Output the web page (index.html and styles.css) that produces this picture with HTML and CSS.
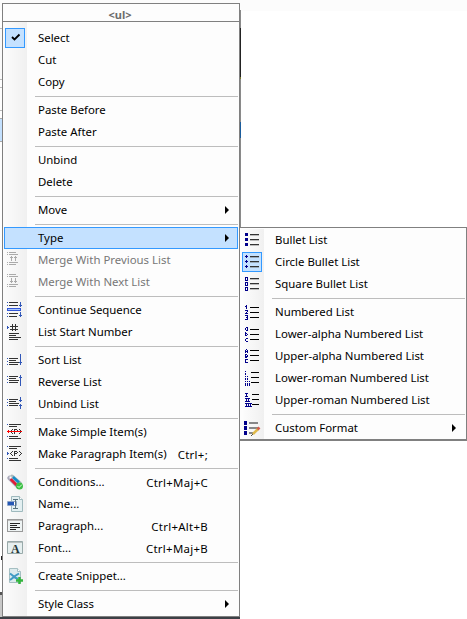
FILE: index.html
```
<!DOCTYPE html>
<html lang="en">
<head>
<meta charset="utf-8">
<title>List menu</title>
<link rel="stylesheet" href="styles.css">
</head>
<body>
<div class="backdrop"><i class="b1"></i><i class="b2"></i><i class="b3"></i><i class="b4"></i><i class="b5"></i><i class="b6"></i><i class="b7"></i><i class="b8"></i><i class="b9"></i><i class="b10"></i><i class="b11"></i></div>
<nav class="menu main">
<header class="title">&lt;ul&gt;</header>
<div class="items">
<div class="item"><span class="icon checked"><svg width="20" height="20"><path d="M7 9l2.500 2.500 5-5" fill="none" stroke="#000" stroke-width="1.800"/></svg></span><span class="label">Select</span></div>
<div class="item"><span class="icon"></span><span class="label">Cut</span></div>
<div class="item"><span class="icon"></span><span class="label">Copy</span></div>
<hr>
<div class="item"><span class="icon"></span><span class="label">Paste Before</span></div>
<div class="item"><span class="icon"></span><span class="label">Paste After</span></div>
<hr>
<div class="item"><span class="icon"></span><span class="label">Unbind</span></div>
<div class="item"><span class="icon"></span><span class="label">Delete</span></div>
<hr>
<div class="item"><span class="icon"></span><span class="label">Move</span><b class="arrow"></b></div>
<hr>
<div class="item active"><span class="icon"></span><span class="label">Type</span><b class="arrow"></b></div>
<div class="item disabled"><span class="icon"><svg class="px" width="16" height="16"><path stroke="#aaa" d="M0 .5h1M2 .5h7M0 2.500h1M2 2.500h9M0 10.500h1M2 10.500h9M0 12.500h1M2 12.500h7M4.500 4v5M8.500 4v5M3 5.500h3M7 5.500h3"/></svg></span><span class="label">Merge With Previous List</span></div>
<div class="item disabled"><span class="icon"><svg class="px" width="16" height="16"><path stroke="#aaa" d="M0 .5h1M2 .5h7M0 2.500h1M2 2.500h9M0 10.500h1M2 10.500h9M0 12.500h1M2 12.500h7M4.500 4v5M8.500 4v5M3 7.500h3M7 7.500h3"/></svg></span><span class="label">Merge With Next List</span></div>
<hr>
<div class="item"><span class="icon"><svg class="px" width="16" height="16"><path stroke="#333" d="M2 .5h9M2 3.500h9M2 11.500h9M2 14.500h8"/><path fill="#aac8ff" stroke="#3157d8" d="M.5 6.500h13v2h-13z"/><path stroke="#3157b8" d="M0 .5h1M0 3.500h1M0 11.500h1M0 14.500h1M13.500 0v5M12 3.500h3M13.500 10v5M12 13.500h3"/></svg></span><span class="label">Continue Sequence</span></div>
<div class="item"><span class="icon"><svg class="px" width="16" height="16"><path stroke="#333" d="M5.500 0v7M8.500 0v7M3 2.500h8M3 5.500h8M2 9.500h10M2 11.500h7M2 13.500h12M2 15.500h9"/><path stroke="#3157b8" d="M.5 2v3M1.500 3v1"/></svg></span><span class="label">List Start Number</span></div>
<hr>
<div class="item"><span class="icon"><svg class="px" width="16" height="16"><path stroke="#333" d="M2 6.500h9M2 8.500h7M2 10.500h10M2 12.500h9"/><path stroke="#3157b8" d="M0 6.500h1M0 9.500h1M0 12.500h1M13.500 2v11M12 10.500h3"/></svg></span><span class="label">Sort List</span></div>
<div class="item"><span class="icon"><svg class="px" width="16" height="16"><path stroke="#333" d="M2 2.500h9M2 4.500h7M2 6.500h10M2 8.500h9"/><path stroke="#3157b8" d="M0 2.500h1M0 5.500h1M0 8.500h1M13.500 1v11M12 3.500h3"/></svg></span><span class="label">Reverse List</span></div>
<div class="item"><span class="icon"><svg class="px" width="16" height="16"><path stroke="#333" d="M2 3.500h9M2 5.500h7M2 7.500h10M2 9.500h9"/><path stroke="#3157b8" d="M0 3.500h1M0 6.500h1M0 9.500h1M13.500 1v5M12 4.500h3M13.500 8v5M12 9.500h3"/></svg></span><span class="label">Unbind List</span></div>
<hr>
<div class="item"><span class="icon"><svg class="px" width="16" height="16"><path stroke="#333" d="M2 .5h12M2 2.500h8M2 12.500h9M2 14.500h12M5.500 5v1M4.500 6v1M4.500 8v1M3.500 7v1M5.500 9v1M7.500 5v5M8 5.500h2M8 7.500h2M10.500 6v1M12.500 5v1M13.500 6v1M14.500 7v1M13.500 8v1M12.500 9v1"/><path stroke="#3157b8" d="M0 .5h1M0 12.500h1"/><path stroke="red" d="M0 7.500h15M1.500 6v3"/></svg></span><span class="label">Make Simple Item(s)</span></div>
<div class="item"><span class="icon"><svg class="px" width="16" height="16"><path stroke="#333" d="M2 .5h12M2 2.500h8M2 12.500h9M2 14.500h12M5.500 5v1M4.500 6v1M3.500 7v1M4.500 8v1M5.500 9v1M7.500 5v5M8 5.500h2M8 7.500h2M10.500 6v1M12.500 5v1M13.500 6v1M14.500 7v1M13.500 8v1M12.500 9v1"/><path stroke="#3157b8" d="M0 .5h1M0 12.500h1M.5 6v3M1.500 7v1"/></svg></span><span class="label">Make Paragraph Item(s)</span><kbd>Ctrl+;</kbd></div>
<hr>
<div class="item"><span class="icon"><svg width="16" height="16"><path d="M2.500 4l8 8" stroke="#aab" stroke-width="4.500" stroke-linecap="round"/><path d="M5 2.500l8 7" stroke="#aab9bd" stroke-width="4" stroke-linecap="round"/><path d="M6 3l6 5.500" stroke="#168bc9" stroke-width="2.500"/><path d="M3.500 5l6 6" stroke="#e01b35" stroke-width="2.500"/><path d="M2.500 2.500h2v2h-2z" fill="#fff"/><circle cx="12.500" cy="12" r="3.500" fill="#3cbf45"/><path d="M10.500 12l1.500 1.500 3-3" stroke="#d8ffd8" fill="none"/></svg></span><span class="label">Conditions...</span><kbd>Ctrl+Maj+C</kbd></div>
<div class="item"><span class="icon"><svg width="16" height="16"><path d="M4.500.5h8l3 3v12h-11z" fill="#e3eff1" stroke="#9eb9bd"/><path d="M12.500.5v3h3" fill="#fff" stroke="#9eb9bd"/><path d="M.5 5.500h9v4h-9z" fill="#fff" stroke="#8ba4c9"/><path d="M1 6h6v3H1z" fill="#2457b5"/><path d="M6 3.500h5M8.500 4v8M6 12.500h5" stroke="#56727e"/></svg></span><span class="label">Name...</span></div>
<div class="item"><span class="icon"><svg class="px" width="16" height="16"><path d="M.5 1.500h15v12H.5z" fill="#eef3f3" stroke="#999"/><path d="M1 2h14v1H1z" fill="#bbb"/><path d="M3 5.500h10M3 7.500h7M3 9.500h10M3 11.500h6" stroke="#222"/></svg></span><span class="label">Paragraph...</span><kbd>Ctrl+Alt+B</kbd></div>
<div class="item"><span class="icon"><svg width="16" height="16"><path d="M.5 1.500h15v12H.5z" fill="#e6efef" stroke="#9aa"/><path d="M1 2h14v1H1z" fill="#b9bfbf"/><text class="glyph" x="4" y="12.500">A</text></svg></span><span class="label">Font...</span><kbd>Ctrl+Maj+B</kbd></div>
<hr>
<div class="item"><span class="icon"><svg width="16" height="16"><path d="M2.500.5h8l3 3v11h-11z" fill="#dcebed" stroke="#a5bfc2"/><path d="M10.500.5v3h3" fill="#fff" stroke="#a5bfc2"/><path d="M3 5.500l4 3 5-3M3 12l4-3 4 2" fill="none" stroke="#409bc4" stroke-width="2"/><path d="M12.500 9v7M9 12.500h7" stroke="#32b43c" stroke-width="2.500"/></svg></span><span class="label">Create Snippet...</span></div>
<hr>
<div class="item"><span class="icon"></span><span class="label">Style Class</span><b class="arrow"></b></div>
</div>
</nav>
<nav class="menu sub">
<div class="item"><span class="icon"><svg class="px" width="16" height="16"><path fill="#00008b" d="M0 0h3v3H0zM0 5h3v3H0zM0 10h3v3H0z"/><path stroke="#333" d="M5 1.500h9M5 6.500h9M5 11.500h9"/><path stroke="#bbb" d="M5 2.500h9M5 7.500h9M5 12.500h9"/></svg></span><span class="label">Bullet List</span></div>
<div class="item"><span class="icon checked"><svg class="px" width="20" height="20"><path stroke="#00008b" d="M3 4.500h3M4.500 3v3M3 9.500h3M4.500 8v3M3 14.500h3M4.500 13v3"/><path stroke="#333" d="M8 4.500h9M8 9.500h9M8 14.500h9"/><path stroke="#9ab" d="M8 5.500h9M8 10.500h9M8 15.500h9"/></svg></span><span class="label">Circle Bullet List</span></div>
<div class="item"><span class="icon"><svg class="px" width="16" height="16"><path fill="#fff" stroke="#00008b" d="M.5.5h2v3h-2zM.5 5.500h2v3h-2zM.5 10.500h2v3h-2z"/><path stroke="#333" d="M5 1.500h9M5 6.500h9M5 11.500h9"/><path stroke="#bbb" d="M5 2.500h9M5 7.500h9M5 12.500h9"/></svg></span><span class="label">Square Bullet List</span></div>
<hr>
<div class="item"><span class="icon"><svg class="px" width="16" height="16"><path stroke="#00008b" d="M1.500 0v4M0 1.500h1M0 5.500h3M2.500 6v1M1.500 7v1M0 8.500h3M0 10.500h3M1 12.500h2M2.500 10v4M0 14.500h3"/><path stroke="#000" d="M5 2.500h9M5 7.500h9M5 12.500h9"/></svg></span><span class="label">Numbered List</span></div>
<div class="item"><span class="icon"><svg class="px" width="16" height="16"><path stroke="#00008b" d="M1 .5h2M.5 1v2M2.500 0v4M1 3.500h2M.5 5v4M1 6.500h1M2.500 7v1M1 8.500h1M1 11.500h2M.5 12v2M1 14.500h2"/><path stroke="#000" d="M5 2.500h9M5 7.500h9M5 12.500h9"/></svg></span><span class="label">Lower-alpha Numbered List</span></div>
<div class="item"><span class="icon"><svg class="px" width="16" height="16"><path stroke="#00008b" d="M.5 1v3M2.500 1v3M1 .5h1M1 2.500h1M.5 5v4M1 5.500h1M1 7h1M1 8.500h1M2.500 6v1M2.500 7v1M.5 10v4M0 10.500h3M0 13.500h3"/><path stroke="#000" d="M5 1.500h9M5 6.500h9M5 11.500h9"/></svg></span><span class="label">Upper-alpha Numbered List</span></div>
<div class="item"><span class="icon"><svg class="px" width="16" height="16"><path stroke="#00008b" d="M.5 0v1M.5 2v2M.5 5v1M.5 7v2M2.500 5v1M2.500 7v2M.5 10v1M.5 12v3M2.500 10v1M2.500 12v3M4.500 10v1M4.500 12v3"/><path stroke="#000" d="M6 1.500h8M6 6.500h8M6 11.500h8"/></svg></span><span class="label">Lower-roman Numbered List</span></div>
<div class="item"><span class="icon"><svg class="px" width="16" height="16"><path stroke="#00008b" d="M0 .5h3M1.500 0v4M0 3.500h3M0 5.500h5M1.500 5v4M3.500 5v4M0 8.500h5M0 10.500h7M1.500 10v4M3.500 10v4M5.500 10v4M0 13.500h7"/><path stroke="#000" d="M7 1.500h7M7 6.500h7M7 11.500h7"/></svg></span><span class="label">Upper-roman Numbered List</span></div>
<hr>
<div class="item"><span class="icon"><svg width="18" height="16"><path fill="#00008b" d="M-1 0h3v4h-3zM-1 5h3v4h-3zM-1 10h3v4h-3z"/><path stroke="#888" stroke-width="2" d="M4 2h9M4 7h9M4 12h4"/><path stroke="#dfb94a" stroke-width="2.500" d="M8 13l5-5"/><path stroke="#d65b4b" stroke-width="2.500" d="M12.500 8.500l2-2"/><path stroke="#554" d="M6 15l2-2"/></svg></span><span class="label">Custom Format</span><b class="arrow"></b></div>
</nav>
</body>
</html>
```
FILE: styles.css
```
* { box-sizing: border-box; }
body { margin: 0; width: 467px; height: 619px; overflow: hidden; position: relative; background: #fff; font-family: "Noto Sans", sans-serif; font-size: 11.4px; color: #000; }
.backdrop i { position: absolute; display: block; }
.b1 { left: 0; top: 0; width: 467px; height: 11px; background: #fcfcfc; }
.b2 { left: 240px; top: 10px; width: 1px; height: 217px; background: #8a8a8a; }
.b3 { left: 240px; top: 28px; width: 1px; height: 49px; background: #222; }
.b4 { left: 240px; top: 122px; width: 1px; height: 16px; background: #1b5c9c; }
.b5 { left: 0; top: 28px; width: 2px; height: 52px; background: #fafafa; border: solid #bbb; border-width: 1px 0; }
.b6 { left: 0; top: 118px; width: 2px; height: 24px; background: #c4e1ff; border: solid #aaa; border-width: 1px 0; }
.b7 { left: 0; top: 592px; width: 2px; height: 27px; background: #c8c8c8; border-top: 3px solid #555; }
.b8 { left: 0; top: 617px; width: 240px; height: 2px; background: #3c4046; }
.b9 { left: 240px; top: 77px; width: 1px; height: 2px; background: #77772a; }
.b10 { left: 0; top: 87px; width: 2px; height: 24px; border: solid #bbb; border-width: 1px 0; }
.b11 { left: 1px; top: 556px; width: 1px; height: 4px; background: #222; }
.menu { position: absolute; background: #fdfdfd; border: 1px solid #808080; }
.main { left: 2px; top: 3px; width: 238px; height: 614px; }
.sub { left: 239px; top: 227px; width: 228px; height: 214px; padding-top: 1px; border-bottom-width: 2px; background: linear-gradient(90deg, #fcfcfc, #f0f0f0) 3px 1px / 21px 210px no-repeat #fdfdfd; }
.title { height: 18px; border-bottom: 1px solid #808080; text-align: center; font: bold 11px/22px "Noto Sans", sans-serif; color: #6d6d6d; padding-right: 2px; }
.items { padding-top: 5px; height: 594px; background: linear-gradient(90deg, #fcfcfc, #f0f0f0) 0 0 / 24px 100% no-repeat; }
.item { height: 22px; display: flex; align-items: center; padding: 0 10px 0 4px; }
.icon { width: 31px; height: 16px; flex: none; display: flex; }
.icon svg { display: block; overflow: visible; }
.sub .icon:not(.checked) { padding: 1px 0 0 1px; }
.px { shape-rendering: crispEdges; }
.checked { width: 20px; height: 20px; margin: 0 13px 0 -2px; background: #c4e1ff; box-shadow: inset 0 0 0 1px #3399ff; }
.label { flex: 1; white-space: nowrap; line-height: 20px; }
kbd { font: inherit; white-space: nowrap; margin-right: 21px; letter-spacing: .3px; }
.disabled { color: #777; }
.active { background: #c4e1ff; box-shadow: inset 0 0 0 1px #3399ff; margin: 0 1px; padding: 0 9px 0 3px; }
.arrow { border-left: 4px solid #000; border-top: 4px solid transparent; border-bottom: 4px solid transparent; }
hr { height: 1px; margin: 3px 1px 2px 32px; border: 0; background: #bdbdbd; }
.glyph { font: bold 12px "Liberation Serif", serif; fill: #243535; }
```
